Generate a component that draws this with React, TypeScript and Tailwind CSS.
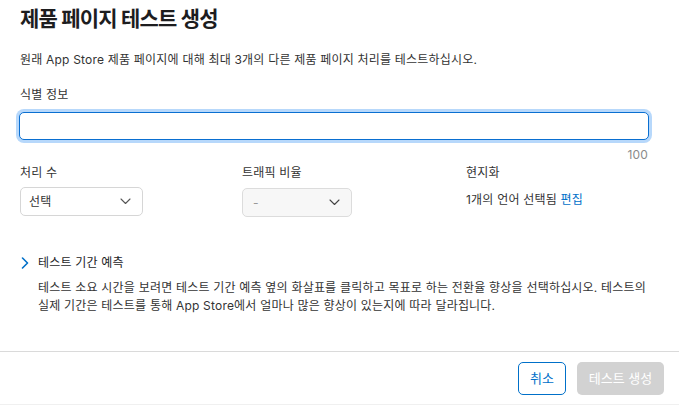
import React from "react";

const Chevron = ({ color = "#555" }: { color?: string }) => (
  <svg width="11" height="7" viewBox="0 0 11 7" fill="none">
    <path d="M1 1 L5.5 5.5 L10 1" stroke={color} strokeWidth="1.1" strokeLinecap="round" strokeLinejoin="round" />
  </svg>
);

export default function App() {
  return (
    <div
      className="w-[679px] h-[405px] bg-white text-[#1d1d1f] flex flex-col overflow-hidden tracking-[0.2px]"
      style={{ fontFamily: 'Inter, "Noto Sans CJK KR", sans-serif' }}
    >
      <div className="flex flex-col px-[20px]">
        <h1 className="mt-[5px] text-[21px] leading-[28px] font-bold tracking-[-0.8px]">제품 페이지 테스트 생성</h1>
        <p className="mt-[18px] text-[12px] leading-[18px] text-[#333]">
          원래 App Store 제품 페이지에 대해 최대 3개의 다른 제품 페이지 처리를 테스트하십시오.
        </p>
        <div className="mt-[17px] text-[12px] leading-[18px] text-[#333]">식별 정보</div>
        <div className="mt-[8px] -ml-[1px] w-[630px] h-[28px] rounded-[5px] border border-[#0a6fd1] shadow-[0_0_0_3px_#b7d8fb] bg-white" />
        <div className="mt-[8px] w-[628px] text-right text-[12px] leading-[14px] text-[#8a8a8a]">100</div>
        <div className="flex mt-[3px]">
          <div className="w-[222px] flex flex-col">
            <div className="text-[12px] leading-[16px] text-[#333]">처리 수</div>
            <div className="mt-[6px] w-[123px] h-[29px] rounded-[5px] border border-[#d6d6d6] bg-white flex items-center justify-between pl-[8px] pr-[11px]">
              <span className="text-[12px] text-[#333]">선택</span>
              <Chevron />
            </div>
          </div>
          <div className="w-[224px] flex flex-col">
            <div className="text-[12px] leading-[16px] text-[#333]">트래픽 비율</div>
            <div className="mt-[7px] w-[110px] h-[29px] rounded-[5px] border border-[#dcdcdc] bg-[#f7f7f7] flex items-center justify-between pl-[10px] pr-[11px]">
              <span className="text-[12px] text-[#999]">-</span>
              <Chevron color="#444" />
            </div>
          </div>
          <div className="flex flex-col">
            <div className="text-[12px] leading-[16px] text-[#333]">현지화</div>
            <div className="mt-[10px] text-[12px] leading-[18px] text-[#333]">
              1개의 언어 선택됨 <span className="text-[#0070c9]">편집</span>
            </div>
          </div>
        </div>
        <div className="mt-[37px] flex items-center">
          <svg width="8" height="12" viewBox="0 0 8 12" fill="none" className="ml-[1px]">
            <path d="M1.5 1 L6.5 6 L1.5 11" stroke="#0070c9" strokeWidth="1.6" strokeLinecap="round" strokeLinejoin="round" />
          </svg>
          <span className="ml-[9px] text-[12px] leading-[18px] text-[#1d1d1f]">테스트 기간 예측</span>
        </div>
        <p className="mt-[7px] ml-[18px] w-[614px] text-[12px] leading-[18px] text-[#333]">
          테스트 소요 시간을 보려면 테스트 기간 예측 옆의 화살표를 클릭하고 목표로 하는 전환율 향상을 선택하십시오. 테스트의 실제 기간은 테스트를 통해 App Store에서 얼마나 많은 향상이 있는지에 따라 달라집니다.
        </p>
      </div>
      <div className="mt-auto border-t border-[#dadada] h-[54px] flex items-start justify-end pr-[15px] pt-[10px] gap-[11px] border-b-[#f0f0f0] border-b">
        <div className="w-[48px] h-[33px] rounded-[5px] border border-[#0070c9] flex items-center justify-center text-[13px] text-[#0070c9] tracking-normal">
          취소
        </div>
        <div className="w-[87px] h-[33px] rounded-[5px] bg-[#d2d2d2] flex items-center justify-center text-[13px] text-white tracking-normal">
          테스트 생성
        </div>
      </div>
    </div>
  );
}
